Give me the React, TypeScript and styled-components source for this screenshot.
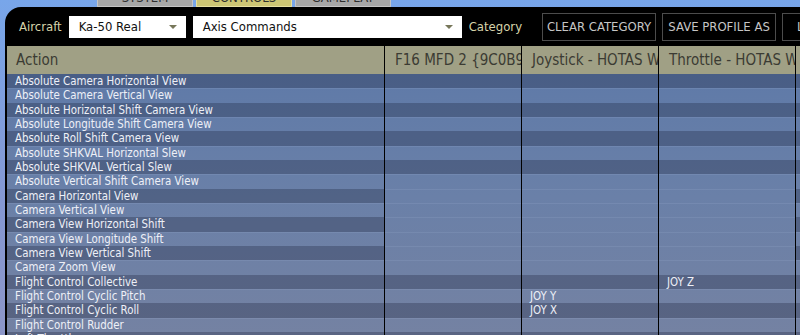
import React from "react";
import styled, { createGlobalStyle } from "styled-components";

const FONT = `"DejaVu Sans Condensed", "DejaVu Sans", sans-serif`;

const GlobalStyle = createGlobalStyle`
  html, body {
    margin: 0;
    padding: 0;
    overflow: hidden;
    background: #7fa3e0;
  }
`;

const Page = styled.div`
  width: 800px;
  height: 335px;
  overflow: hidden;
  display: flex;
  flex-direction: column;
  background: linear-gradient(to bottom, #78a6ea 0%, #8598d2 60%, #8c96c8 100%);
  font-family: ${FONT};
  font-stretch: condensed;
`;

const TabBar = styled.div`
  display: flex;
  gap: 3px;
  height: 7px;
  padding-left: 97px;
  flex: none;
`;

const Tab = styled.div<{ $active?: boolean }>`
  width: 94px;
  height: 6px;
  overflow: hidden;
  background: ${(p) => (p.$active ? "#cdc574" : "#a7a7a7")};
  border: 1px solid ${(p) => (p.$active ? "#e6dfa0" : "#c4c4c4")};
  border-top: none;
  color: #2e2e2e;
  font-size: 13px;
  text-align: center;
`;

const TabLabel = styled.span`
  display: block;
  line-height: 13px;
  margin-top: -9px;
`;

const Panel = styled.div`
  flex: 1;
  width: 1000px;
  margin-left: 5px;
  padding-left: 2px;
  background: #000;
  border-top-left-radius: 16px;
  display: flex;
  flex-direction: column;
`;

const Toolbar = styled.div`
  display: flex;
  align-items: center;
  height: 39px;
  padding-left: 12px;
  flex: none;
`;

const Label = styled.span<{ $gap: number }>`
  color: #d6d3aa;
  font-size: 13px;
  margin-right: ${(p) => p.$gap}px;
  white-space: nowrap;
`;

const Select = styled.div<{ $w: number }>`
  width: ${(p) => p.$w}px;
  height: 22px;
  box-sizing: border-box;
  background: #fff;
  display: flex;
  align-items: center;
  padding-left: 10px;
  margin-right: 7px;
  color: #111;
  font-size: 13px;
  flex: none;
`;

const Arrow = styled.span`
  margin-left: auto;
  margin-right: 9px;
  width: 0;
  height: 0;
  border-left: 4px solid transparent;
  border-right: 4px solid transparent;
  border-top: 4px solid #77775a;
`;

const Button = styled.button`
  width: 114px;
  height: 28px;
  margin-right: 6px;
  padding: 0;
  background: #000;
  border: 1px solid #4c4c4c;
  color: #c6c6c6;
  font-family: ${FONT};
  font-stretch: condensed;
  font-size: 13px;
  white-space: nowrap;
  overflow: hidden;
  flex: none;
`;

const COLS = "377px repeat(4, 137px)";

const Table = styled.div`
  display: flex;
  flex-direction: column;
  flex: 1;
`;

const HeaderRow = styled.div`
  display: grid;
  grid-template-columns: ${COLS};
  height: 28px;
  background: #a0a085;
  flex: none;
`;

const HeaderCell = styled.div<{ $first?: boolean }>`
  border-left: ${(p) => (p.$first ? "none" : "1px solid #000")};
  padding-left: ${(p) => (p.$first ? 9 : 10)}px;
  padding-top: 1px;
  line-height: 27px;
  font-size: 15px;
  color: #3b3b33;
  white-space: nowrap;
  overflow: hidden;
`;

const Body = styled.div`
  flex: 1;
  background: linear-gradient(to bottom, #5f7aa8 0%, #6a80a8 45%, #7582a2 100%);
`;

const Row = styled.div`
  display: grid;
  grid-template-columns: ${COLS};
  height: 14.33px;
`;

const Cell = styled.div<{ $dark: boolean; $first?: boolean }>`
  background: ${(p) => (p.$dark ? "rgba(10, 16, 40, 0.26)" : "transparent")};
  box-shadow: ${(p) =>
    p.$dark ? "none" : "inset 0 1px 0 rgba(190, 205, 240, 0.12)"};
  border-left: ${(p) => (p.$first ? "none" : "1px solid #000")};
  padding-left: 8px;
  line-height: 14.33px;
  font-size: 11.4px;
  color: #eef0f7;
  white-space: nowrap;
  overflow: hidden;
`;

const actions = [
  "Absolute Camera Horizontal View",
  "Absolute Camera Vertical View",
  "Absolute Horizontal Shift Camera View",
  "Absolute Longitude Shift Camera View",
  "Absolute Roll Shift Camera View",
  "Absolute SHKVAL Horizontal Slew",
  "Absolute SHKVAL Vertical Slew",
  "Absolute Vertical Shift Camera View",
  "Camera Horizontal View",
  "Camera Vertical View",
  "Camera View Horizontal Shift",
  "Camera View Longitude Shift",
  "Camera View Vertical Shift",
  "Camera Zoom View",
  "Flight Control Collective",
  "Flight Control Cyclic Pitch",
  "Flight Control Cyclic Roll",
  "Flight Control Rudder",
  "Left Throttle",
];

const devices = [
  "F16 MFD 2 {9C0B9A40-4D5E-11E8}",
  "Joystick - HOTAS Warthog",
  "Throttle - HOTAS Warthog",
  "Saitek Pro Flight Rudder",
];

const bindings: Record<number, string[]> = {
  14: ["", "", "JOY Z", ""],
  15: ["", "JOY Y", "", ""],
  16: ["", "JOY X", "", ""],
};

const plainRows = new Set([8, 9, 10, 11, 12, 13]);

export default function App() {
  return (
    <Page>
      <GlobalStyle />
      <TabBar>
        <Tab>
          <TabLabel>SYSTEM</TabLabel>
        </Tab>
        <Tab $active>
          <TabLabel>CONTROLS</TabLabel>
        </Tab>
        <Tab>
          <TabLabel>GAMEPLAY</TabLabel>
        </Tab>
      </TabBar>
      <Panel>
        <Toolbar>
          <Label $gap={7}>Aircraft</Label>
          <Select $w={117}>
            Ka-50 Real
            <Arrow />
          </Select>
          <Select $w={269}>
            Axis Commands
            <Arrow />
          </Select>
          <Label $gap={20}>Category</Label>
          <Button>CLEAR CATEGORY</Button>
          <Button>SAVE PROFILE AS</Button>
          <Button>LOAD PROFILE</Button>
        </Toolbar>
        <Table>
          <HeaderRow>
            <HeaderCell $first>Action</HeaderCell>
            {devices.map((d) => (
              <HeaderCell key={d}>{d}</HeaderCell>
            ))}
          </HeaderRow>
          <Body>
            {actions.map((a, i) => {
              const dark = i % 2 === 0;
              const b = bindings[i] || ["", "", "", ""];
              return (
                <Row key={a}>
                  <Cell $first $dark={dark}>
                    {a}
                  </Cell>
                  {b.map((v, j) => (
                    <Cell
                      key={j}
                      $dark={dark && (j === 3 || !plainRows.has(i))}
                    >
                      {v}
                    </Cell>
                  ))}
                </Row>
              );
            })}
          </Body>
        </Table>
      </Panel>
    </Page>
  );
}
